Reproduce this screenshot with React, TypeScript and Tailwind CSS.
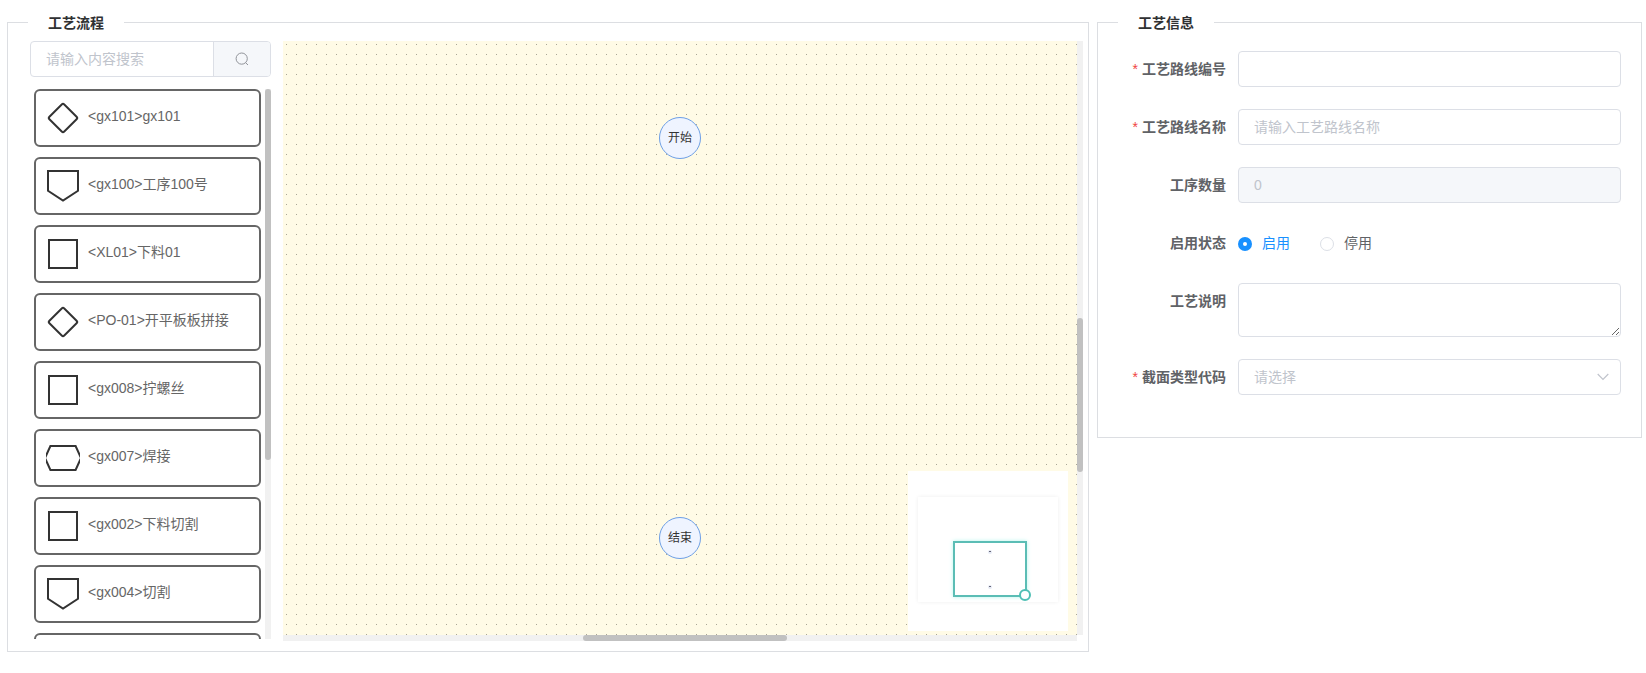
import React from "react";

type Shape = "diamond" | "pentagon" | "square" | "hexagon";

const steps: { code: string; name: string; shape: Shape }[] = [
  { code: "gx101", name: "gx101", shape: "diamond" },
  { code: "gx100", name: "工序100号", shape: "pentagon" },
  { code: "XL01", name: "下料01", shape: "square" },
  { code: "PO-01", name: "开平板板拼接", shape: "diamond" },
  { code: "gx008", name: "拧螺丝", shape: "square" },
  { code: "gx007", name: "焊接", shape: "hexagon" },
  { code: "gx002", name: "下料切割", shape: "square" },
  { code: "gx004", name: "切割", shape: "pentagon" },
  { code: "", name: "", shape: "square" },
];

function ShapeIcon({ shape }: { shape: Shape }) {
  return (
    <svg width="34" height="34" viewBox="0 0 34 34" fill="none" stroke="#333" strokeWidth="2" className="shrink-0">
      {shape === "diamond" && <rect x="6.5" y="6.5" width="21" height="21" rx="1.8" transform="rotate(45 17 17)" />}
      {shape === "pentagon" && <path d="M2 2H32V21.8L17 31.5 2 21.8Z" />}
      {shape === "square" && <rect x="3" y="3" width="28" height="28" />}
      {shape === "hexagon" && <path d="M4.4 5H29.6L35 17 29.6 29H4.4L-1 17Z" />}
    </svg>
  );
}

function Panel({ title, className, children }: { title: string; className: string; children: React.ReactNode }) {
  return (
    <section className={`border border-[#dcdee2] ${className}`}>
      <div className="-mt-3 ml-5 flex h-6 w-24 items-center bg-white pl-5 text-sm font-bold text-[#303133]">{title}</div>
      {children}
    </section>
  );
}

function FlowNode({ label, className }: { label: string; className: string }) {
  return (
    <div className={`absolute flex size-[42px] items-center justify-center rounded-full border border-[#6d9fe6] bg-[#eff4ff] text-xs text-[#333] ${className}`}>
      {label}
    </div>
  );
}

function Row({ label, required, className, children }: { label: string; required?: boolean; className: string; children: React.ReactNode }) {
  return (
    <div className={`flex ${className}`}>
      <div className="flex h-9 w-[140px] shrink-0 items-center justify-end pr-3 text-sm font-bold text-[#606266]">
        {required && <span className="mr-1 font-normal text-[#f04444]">*</span>}
        {label}
      </div>
      {children}
    </div>
  );
}

const field = "h-9 w-[383px] rounded border border-[#dcdfe6] px-[15px] text-sm outline-none placeholder:text-[#c0c4cc]";

export default function App() {
  return (
    <div className="flex h-[673px] w-[1646px] items-start gap-2 overflow-hidden bg-white pt-[22px] pl-[7px] font-['Liberation_Sans','Noto_Sans_CJK_SC',sans-serif]">
      <Panel title="工艺流程" className="h-[630px] w-[1082px] shrink-0">
        <div className="mt-[6px] ml-[22px] flex">
          <div className="w-[241px] shrink-0">
            <div className="flex h-9 overflow-hidden rounded border border-[#dcdfe6]">
              <input placeholder="请输入内容搜索" className="w-[183px] border-r border-[#dcdfe6] px-[15px] text-sm outline-none placeholder:text-[#c0c4cc]" />
              <button className="flex flex-1 items-center justify-center bg-[#f5f7fa]" aria-label="搜索">
                <svg width="14" height="14" viewBox="0 0 14 14" fill="none" stroke="#909399">
                  <circle cx="6.7" cy="6.6" r="5.6" />
                  <path d="M10.6 10.7 13 13" />
                </svg>
              </button>
            </div>
            <div className="mt-3 flex h-[550px] overflow-hidden">
              <div className="flex w-[235px] shrink-0 flex-col gap-[10px] pl-1">
                {steps.map((s, i) => (
                  <div key={i} className="flex h-[58px] w-[227px] shrink-0 items-center rounded-md border-2 border-[#666] pl-[10px] text-sm text-[#666]">
                    <ShapeIcon shape={s.shape} />
                    <span className="mb-[5px] ml-2">{s.code && `<${s.code}>${s.name}`}</span>
                  </div>
                ))}
              </div>
              <div className="w-1.5 bg-[#f1f1f1]">
                <div className="h-[371px] rounded-[3px] bg-[#c1c1c1]" />
              </div>
            </div>
          </div>

          <div className="ml-3 flex w-[800px] flex-wrap">
            <div className="relative h-[594px] w-[794px] bg-[#fffbe6]">
              <svg width="794" height="594" className="block">
                <defs>
                  <pattern id="dots" width="10" height="10" patternUnits="userSpaceOnUse">
                    <rect x="3" y="3" width="1" height="1" fill="#aaa695" />
                  </pattern>
                </defs>
                <rect width="794" height="594" fill="url(#dots)" />
              </svg>
              <FlowNode label="开始" className="top-[76px] left-[376px]" />
              <FlowNode label="结束" className="top-[476px] left-[376px]" />
              <div className="absolute top-[430px] left-[625px] size-40 bg-white">
                <div className="absolute top-[26px] left-[10px] h-[105px] w-[140px] bg-white shadow-[0_0_4px_#eee]" />
                <div className="absolute top-[79px] left-[80px] h-1 w-1 rounded-full bg-[#e6eaf5]">
                  <div className="mx-auto mt-[1px] h-px w-0.5 bg-[#667]" />
                </div>
                <div className="absolute top-[114px] left-[80px] h-1 w-1 rounded-full bg-[#e6eaf5]">
                  <div className="mx-auto mt-[1px] h-px w-0.5 bg-[#667]" />
                </div>
                <div className="absolute top-[70px] left-[45px] h-[56px] w-[74px] border-2 border-[#5bbdb5] shadow-[0_0_4px_#b5f5ec]" />
                <div className="absolute top-[118px] left-[111px] size-3 rounded-full border-2 border-[#4fbfb4] bg-white" />
              </div>
            </div>
            <div className="h-[594px] w-1.5 bg-[#f1f1f1] pt-[277px]">
              <div className="h-[154px] rounded-[3px] bg-[#c1c1c1]" />
            </div>
            <div className="h-1.5 w-[794px] bg-[#f1f1f1] pl-[300px]">
              <div className="h-1.5 w-[204px] rounded-[3px] bg-[#c1c1c1]" />
            </div>
          </div>
        </div>
      </Panel>

      <Panel title="工艺信息" className="h-[416px] w-[545px] shrink-0">
        <div className="mt-4 flex flex-col gap-[22px]">
          <Row label="工艺路线编号" required className="h-9">
            <input className={field} />
          </Row>
          <Row label="工艺路线名称" required className="h-9">
            <input className={field} placeholder="请输入工艺路线名称" />
          </Row>
          <Row label="工序数量" className="h-9">
            <input className={`${field} bg-[#f5f7fa] text-[#c0c4cc]`} disabled defaultValue="0" />
          </Row>
          <Row label="启用状态" className="h-9">
            <div className="flex items-center text-sm text-[#606266]">
              <span className="mt-0.5 flex size-[14px] items-center justify-center rounded-full bg-[#1890ff]">
                <span className="size-1 rounded-full bg-white" />
              </span>
              <span className="ml-[10px] text-[#1890ff]">启用</span>
              <span className="mt-0.5 ml-[30px] size-[14px] rounded-full border border-[#dcdfe6]" />
              <span className="ml-[10px]">停用</span>
            </div>
          </Row>
          <Row label="工艺说明" className="h-[54px]">
            <textarea className="h-[54px] w-[383px] resize-y rounded border border-[#dcdfe6] outline-none" />
          </Row>
          <Row label="截面类型代码" required className="h-9">
            <div className={`${field} flex items-center justify-between pr-[11px] text-[#c0c4cc]`}>
              请选择
              <svg width="12" height="8" viewBox="0 0 12 8" fill="none" stroke="#c0c4cc" strokeWidth="1.2">
                <path d="M.7 1 6 6.3 11.3 1" />
              </svg>
            </div>
          </Row>
        </div>
      </Panel>
    </div>
  );
}
